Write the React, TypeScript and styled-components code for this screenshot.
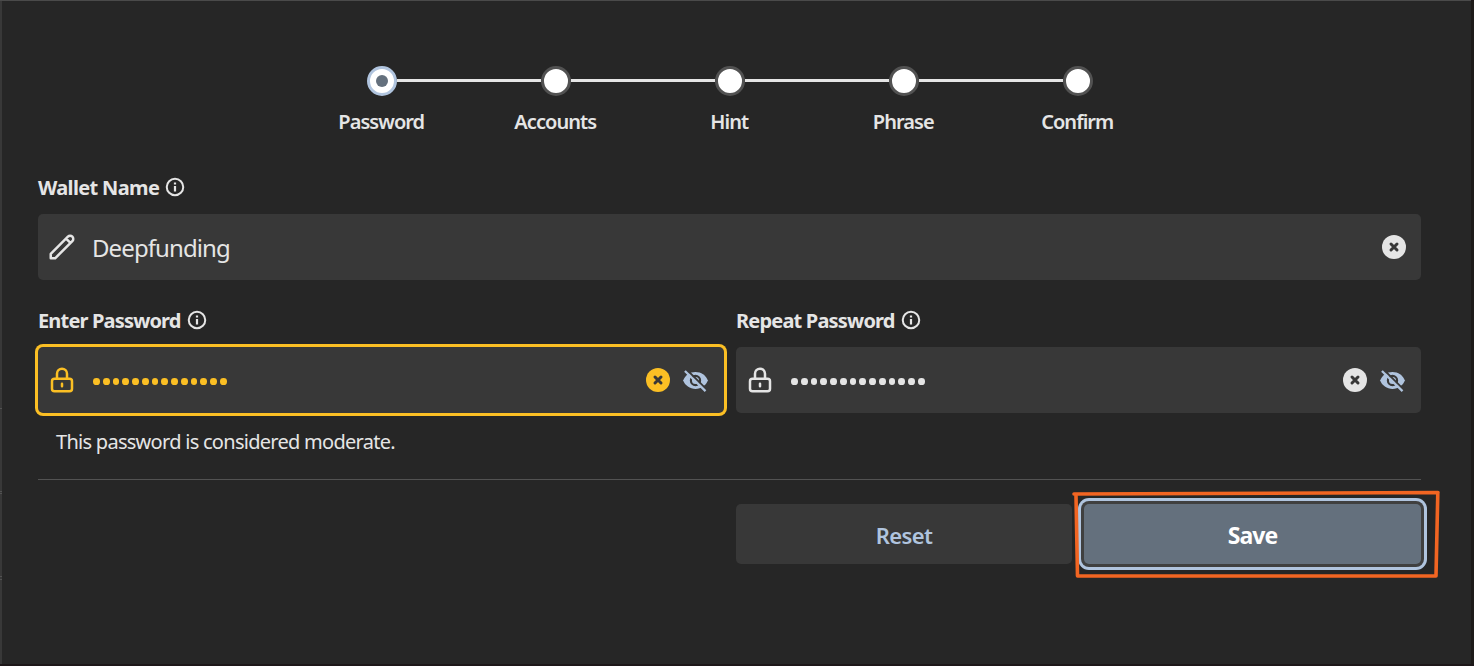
import React, { useId } from 'react';
import styled, { createGlobalStyle, css } from 'styled-components';

const GlobalStyle = createGlobalStyle`
  * { box-sizing: border-box; }
  html, body { margin: 0; background: #262626; overflow: hidden; }
  body { font-family: 'Noto Sans', 'Open Sans', sans-serif; color: #e5e5e5; }
`;

const Frame = styled.div`
  display: grid;
  grid-template-columns: 2px 1469px 3px;
  grid-template-rows: 1px 663px 2px;
  width: 1474px;
  height: 666px;
  background: #1d1719;
`;
const TopEdge = styled.div`
  grid-column: 1 / 3;
  background: #4a4a4a;
`;
const LeftRail = styled.div`
  grid-column: 1;
  grid-row: 2;
  display: flex;
  flex-direction: column;
  background: #383838;
`;
const RailMark = styled.i<{ $gap: number }>`
  height: 1px;
  margin-top: ${(p) => p.$gap}px;
  background: #525252;
`;
const RightEdge = styled.div`
  grid-column: 3;
  grid-row: 2;
  background: #1e1b19;
`;
const Panel = styled.main`
  grid-column: 2;
  grid-row: 2;
  display: flex;
  flex-direction: column;
  padding: 65px 50px 0 36px;
  background: #262626;
`;

const Steps = styled.ol`
  display: grid;
  grid-template-columns: repeat(5, 174px);
  width: 870px;
  height: 72px;
  margin: 0 0 0 257px;
  padding: 0;
  list-style: none;
`;
const Step = styled.li`
  display: flex;
  flex-direction: column;
  align-items: center;
`;
const Track = styled.div`
  display: grid;
  grid-template-columns: 1fr 30px 1fr;
  align-items: center;
  width: 100%;
  height: 30px;
`;
const Line = styled.span<{ $hidden?: boolean }>`
  height: 3px;
  margin-bottom: 1px;
  background: ${(p) => (p.$hidden ? 'transparent' : '#e5e5e5')};
`;
const Dot = styled.span<{ $active?: boolean }>`
  display: grid;
  place-items: center;
  width: 30px;
  height: 30px;
  border: 3px solid ${(p) => (p.$active ? '#b0c4de' : '#525252')};
  border-radius: 50%;
  background: #fff;
  &::after {
    content: '';
    width: 12px;
    height: 12px;
    border-radius: 50%;
    background: ${(p) => (p.$active ? '#64707d' : '#fff')};
  }
`;
const Text = styled.span<{ $size: number; $weight?: number; $track?: number }>`
  font-size: ${(p) => p.$size}px;
  font-weight: ${(p) => p.$weight ?? 400};
  letter-spacing: ${(p) => p.$track ?? 0}px;
  line-height: 30px;
  white-space: nowrap;
`;
const StepName = styled(Text)`
  margin: 11px 1.5px 0 0;
`;

const Label = styled.label`
  display: flex;
  align-items: center;
  gap: 5px;
  height: 30px;
`;
const LabelText = styled(Text)`
  margin-top: 2px;
`;
const Field = styled.div<{ $warn?: boolean }>`
  display: flex;
  align-items: center;
  height: 66px;
  padding: 0 15px 0 9px;
  border-radius: 5px;
  background: #383838;
  ${(p) =>
    p.$warn &&
    css`
      color: #fbbf24;
      box-shadow: 0 0 0 3px #fbbf24;
    `}
`;
const Value = styled(Text)`
  flex: 1;
  margin: 2px 0 0 15px;
`;
const Dots = styled.div`
  display: flex;
  flex: 1;
  gap: 3.07px;
  margin: 3.6px 0 0 16.2px;
  i {
    width: 6.7px;
    height: 6.7px;
    border-radius: 50%;
    background: currentColor;
  }
`;
const Actions = styled.div`
  display: flex;
  align-items: center;
  gap: 12px;
`;
const WalletGroup = styled.section`
  display: flex;
  flex-direction: column;
  gap: 12px;
  margin-top: 34px;
`;
const Passwords = styled.div`
  display: grid;
  grid-template-columns: 686px 685px;
  gap: 12px;
  height: 174px;
  margin-top: 25px;
`;
const PasswordGroup = styled.section`
  display: flex;
  flex-direction: column;
  gap: 12px;
`;
const Message = styled(Text)`
  margin: 2px 0 0 18px;
`;
const Divider = styled.hr`
  width: 100%;
  height: 1px;
  margin: 0;
  border: 0;
  background: #525252;
`;
const Buttons = styled.div`
  display: flex;
  justify-content: flex-end;
  gap: 12px;
  margin-top: 24px;
`;
const Button = styled.button<{ $primary?: boolean }>`
  position: relative;
  display: flex;
  align-items: center;
  justify-content: center;
  width: ${(p) => (p.$primary ? 337 : 336)}px;
  height: 60px;
  padding: 2px 0 0;
  border: 0;
  border-radius: 5px;
  font-family: inherit;
  color: ${(p) => (p.$primary ? '#fff' : '#b0c4de')};
  background: ${(p) => (p.$primary ? '#64707d' : '#383838')};
  box-shadow: ${(p) => (p.$primary ? '0 0 0 3px #404040, 0 0 0 6px #b0c4de' : 'none')};
`;
const Highlight = styled.svg`
  position: absolute;
  left: -14px;
  top: -16px;
  width: 374px;
  height: 94px;
  pointer-events: none;
`;

const InfoIcon = () => (
  <svg width="22" height="22" viewBox="0 0 24 24" fill="none" stroke="currentColor" strokeWidth="2.2">
    <circle cx="12" cy="12" r="9" />
    <path d="M12 11v6M12 7v2.2" strokeWidth="2.4" />
  </svg>
);
const OutlineIcon = ({ d }: { d: string }) => (
  <svg width="30" height="30" viewBox="0 0 24 24" fill="none" stroke="currentColor" strokeWidth="2" strokeLinecap="round" strokeLinejoin="round">
    <path d={d} />
  </svg>
);
const PENCIL = 'M15.232 5.232l3.536 3.536m-2.036-5.036a2.5 2.5 0 113.536 3.536L6.5 21.036H3v-3.572L16.732 3.732z';
const LOCK = 'M12 15v2m-6 4h12a2 2 0 002-2v-6a2 2 0 00-2-2H6a2 2 0 00-2 2v6a2 2 0 002 2zm10-10V7a4 4 0 00-8 0v4h8z';
const ClearIcon = () => (
  <svg width="24" height="24" viewBox="0 0 24 24">
    <circle cx="12" cy="12" r="12" fill="currentColor" />
    <path d="M9 9l6 6m0-6l-6 6" stroke="#383838" strokeWidth="3" strokeLinecap="round" />
  </svg>
);
const EyeOffIcon = () => {
  const id = useId();
  return (
    <svg width="27" height="27" viewBox="0 0 24 24" fill="#b0c4de">
      <mask id={id}>
        <rect width="24" height="24" fill="#fff" />
        <circle cx="12" cy="12" r="4.1" fill="none" stroke="#000" strokeWidth="1.9" />
        <path d="M3.5 1.7L22.5 20.7" stroke="#000" strokeWidth="1.8" />
      </mask>
      <path mask={`url(#${id})`} d="M12 4.5C7 4.5 2.73 7.61 1 12c1.73 4.39 6 7.5 11 7.5s9.27-3.11 11-7.5c-1.73-4.39-6-7.5-11-7.5z" />
      <path d="M2.6 3.6L20.9 21.4" fill="none" stroke="#b0c4de" strokeWidth="2" />
    </svg>
  );
};

const steps = ['Password', 'Accounts', 'Hint', 'Phrase', 'Confirm'];

const PasswordField = ({ warn }: { warn?: boolean }) => (
  <Field $warn={warn}>
    <OutlineIcon d={LOCK} />
    <Dots>
      {Array.from({ length: 14 }, (_, i) => (
        <i key={i} />
      ))}
    </Dots>
    <Actions>
      <ClearIcon />
      <EyeOffIcon />
    </Actions>
  </Field>
);

export default function App() {
  return (
    <>
      <GlobalStyle />
      <Frame>
        <TopEdge />
        <LeftRail>
          <RailMark $gap={407} />
          <RailMark $gap={82} />
          <RailMark $gap={1} />
          <RailMark $gap={82} />
          <RailMark $gap={2} />
        </LeftRail>
        <Panel>
          <Steps>
            {steps.map((name, i) => (
              <Step key={name}>
                <Track>
                  <Line $hidden={i === 0} />
                  <Dot $active={i === 0} />
                  <Line $hidden={i === steps.length - 1} />
                </Track>
                <StepName $size={20} $weight={600} $track={-0.95}>{name}</StepName>
              </Step>
            ))}
          </Steps>
          <WalletGroup>
            <Label>
              <LabelText $size={20} $weight={700} $track={-0.65}>Wallet Name</LabelText>
              <InfoIcon />
            </Label>
            <Field>
              <OutlineIcon d={PENCIL} />
              <Value $size={24} $track={-0.9}>Deepfunding</Value>
              <Actions>
                <ClearIcon />
              </Actions>
            </Field>
          </WalletGroup>
          <Passwords>
            <PasswordGroup>
              <Label>
                <LabelText $size={20} $weight={700} $track={-0.83}>Enter Password</LabelText>
                <InfoIcon />
              </Label>
              <PasswordField warn />
              <Message $size={20} $track={-0.72}>This password is considered moderate.</Message>
            </PasswordGroup>
            <PasswordGroup>
              <Label>
                <LabelText $size={20} $weight={700} $track={-0.81}>Repeat Password</LabelText>
                <InfoIcon />
              </Label>
              <PasswordField />
            </PasswordGroup>
          </Passwords>
          <Divider />
          <Buttons>
            <Button>
              <Text $size={22} $weight={600} $track={-0.6}>Reset</Text>
            </Button>
            <Button $primary>
              <Text $size={23} $weight={700} $track={-0.9}>Save</Text>
              <Highlight viewBox="0 0 374 94" fill="none" stroke="#f26522" strokeWidth="3.6" strokeLinecap="round" strokeLinejoin="round">
                <path d="M4 6L368 4.5M6 8l1.5 80H366L367.8 5" />
              </Highlight>
            </Button>
          </Buttons>
        </Panel>
        <RightEdge />
      </Frame>
    </>
  );
}
